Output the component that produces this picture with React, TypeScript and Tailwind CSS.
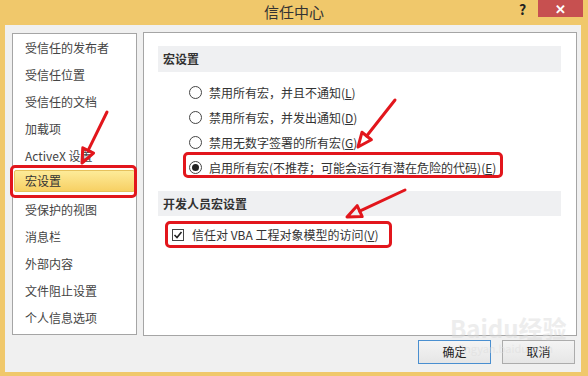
const font = { fontFamily: '"Noto Sans CJK SC", "Noto Sans", sans-serif' };

const navItems = [
  "受信任的发布者",
  "受信任位置",
  "受信任的文档",
  "加载项",
  "ActiveX 设置",
  "宏设置",
  "受保护的视图",
  "消息栏",
  "外部内容",
  "文件阻止设置",
  "个人信息选项",
];

const macroOptions = [
  { label: "禁用所有宏，并且不通知", key: "L" },
  { label: "禁用所有宏，并发出通知", key: "D" },
  { label: "禁用无数字签署的所有宏", key: "G" },
  { label: "启用所有宏(不推荐；可能会运行有潜在危险的代码)", key: "E" },
];

// red annotation arrow with a hollow head
function Arrow({ x1, y1, x2, y2 }: { x1: number; y1: number; x2: number; y2: number }) {
  const len = Math.hypot(x2 - x1, y2 - y1);
  const dx = (x2 - x1) / len;
  const dy = (y2 - y1) / len;
  const bx = x2 - dx * 14;
  const by = y2 - dy * 14;
  const px = -dy * 6;
  const py = dx * 6;
  return (
    <g stroke="#e2161c" strokeWidth="3" fill="none" strokeLinejoin="round" strokeLinecap="round">
      <line x1={x1} y1={y1} x2={bx} y2={by} />
      <polygon points={`${x2},${y2} ${bx + px},${by + py} ${bx - px},${by - py}`} />
    </g>
  );
}

function Radio({ checked }: { checked?: boolean }) {
  return (
    <div className="w-[13px] h-[13px] rounded-full border border-[#444] bg-white flex items-center justify-center">
      {checked && <div className="w-[7px] h-[7px] rounded-full bg-[#222]" />}
    </div>
  );
}

function App() {
  return (
    <div className="relative w-[588px] h-[376px] bg-[#f0c86b] flex flex-col overflow-hidden text-[#333]" style={font}>
      {/* title bar */}
      <div className="relative h-[25px] flex items-center justify-center">
        <span className="text-[15px] text-[#333]">信任中心</span>
        <span className="absolute left-[519px] top-[-1px] text-[14px] font-bold text-[#222]">?</span>
        <div className="absolute left-[538px] top-0 w-[45px] h-[17px] bg-[#c75050] flex items-center justify-center text-white text-[13px] font-bold">
          ✕
        </div>
      </div>

      {/* client area */}
      <div className="ml-[5px] mr-[7px] mb-[4px] flex-1 bg-[#f0f0f0] flex flex-col pl-[7px] pr-[4px] pt-[7px]">
        <div className="flex gap-[6px]">
          {/* left nav */}
          <div className="mt-[1px] w-[125px] h-[302px] bg-white border border-[#a5a5a5] flex flex-col">
            {navItems.map((item) => (
              <div key={item} className="h-[27px] flex items-center px-[1px]">
                {item === "宏设置" ? (
                  <div className="w-full h-[22px] mt-[-3px] rounded-[2px] border border-[#e6c15c] bg-gradient-to-b from-[#fdeb98] to-[#f7d063] flex items-center pl-[10px] text-[12px] text-[#333]">
                    {item}
                  </div>
                ) : (
                  <div className="pl-[11px] text-[12px] text-[#444]">{item}</div>
                )}
              </div>
            ))}
          </div>

          {/* right content */}
          <div className="w-[434px] h-[304px] bg-white border border-[#a5a5a5] pt-[13px] pl-[14px] pr-[15px]">
            <div className="h-[26px] bg-[#eff0f2] flex items-center pl-[5px] text-[12px] font-bold text-[#333]">宏设置</div>
            <div className="mt-[8px] flex flex-col">
              {macroOptions.map((o, i) => (
                <div key={o.key} className="h-[25px] flex items-center pl-[31px] gap-[7px] text-[12px] text-[#333]">
                  <Radio checked={i === 3} />
                  <span>
                    {o.label}(<span className="underline">{o.key}</span>)
                  </span>
                </div>
              ))}
            </div>
            <div className="mt-[11px] h-[25px] bg-[#eff0f2] flex items-center pl-[5px] text-[12px] font-bold text-[#333]">
              开发人员宏设置
            </div>
            <div className="mt-[7px] h-[24px] flex items-center pl-[14px] gap-[8px] text-[12px] text-[#333]">
              <div className="w-[12px] h-[12px] border border-[#444] bg-white flex items-center justify-center">
                <svg width="10" height="10" viewBox="0 0 10 10">
                  <path d="M1.5 5 L4 7.5 L8.5 2" stroke="#222" strokeWidth="1.6" fill="none" />
                </svg>
              </div>
              <span>
                信任对 VBA 工程对象模型的访问(<span className="underline">V</span>)
              </span>
            </div>
          </div>
        </div>

        {/* buttons */}
        <div className="mt-[4px] flex justify-end gap-[11px] pr-[2px]">
          <button className="w-[73px] h-[24px] border border-[#4a8fd0] bg-gradient-to-b from-[#f4f4f4] to-[#e6e6e6] text-[12px] text-[#222]">
            确定
          </button>
          <button className="w-[73px] h-[24px] border border-[#acacac] bg-gradient-to-b from-[#f4f4f4] to-[#e6e6e6] text-[12px] text-[#222]">
            取消
          </button>
        </div>
      </div>

      {/* faint watermark */}
      <div className="absolute left-[450px] top-[316px] pointer-events-none text-[#dcdcdc] opacity-50 flex flex-col items-start leading-none whitespace-nowrap">
        <span className="text-[24px] font-bold">Baidu经验</span>
        <span className="text-[11px] ml-[8px] mt-[3px]">jingyan.baidu.com</span>
      </div>

      {/* red annotation boxes */}
      <div className="absolute left-[10px] top-[165px] w-[127px] h-[33px] border-[3px] border-[#e2161c] rounded-[5px] pointer-events-none" />
      <div className="absolute left-[183px] top-[152px] w-[320px] h-[26px] border-[3px] border-[#e2161c] rounded-[5px] pointer-events-none" />
      <div className="absolute left-[165px] top-[221px] w-[227px] h-[27px] border-[3px] border-[#e2161c] rounded-[5px] pointer-events-none" />

      <svg className="absolute inset-0 pointer-events-none" width="588" height="376">
        <Arrow x1={107} y1={112} x2={82} y2={163} />
        <Arrow x1={395} y1={100} x2={358} y2={147} />
        <Arrow x1={405} y1={190} x2={347} y2={217} />
      </svg>
    </div>
  );
}

export default App;
